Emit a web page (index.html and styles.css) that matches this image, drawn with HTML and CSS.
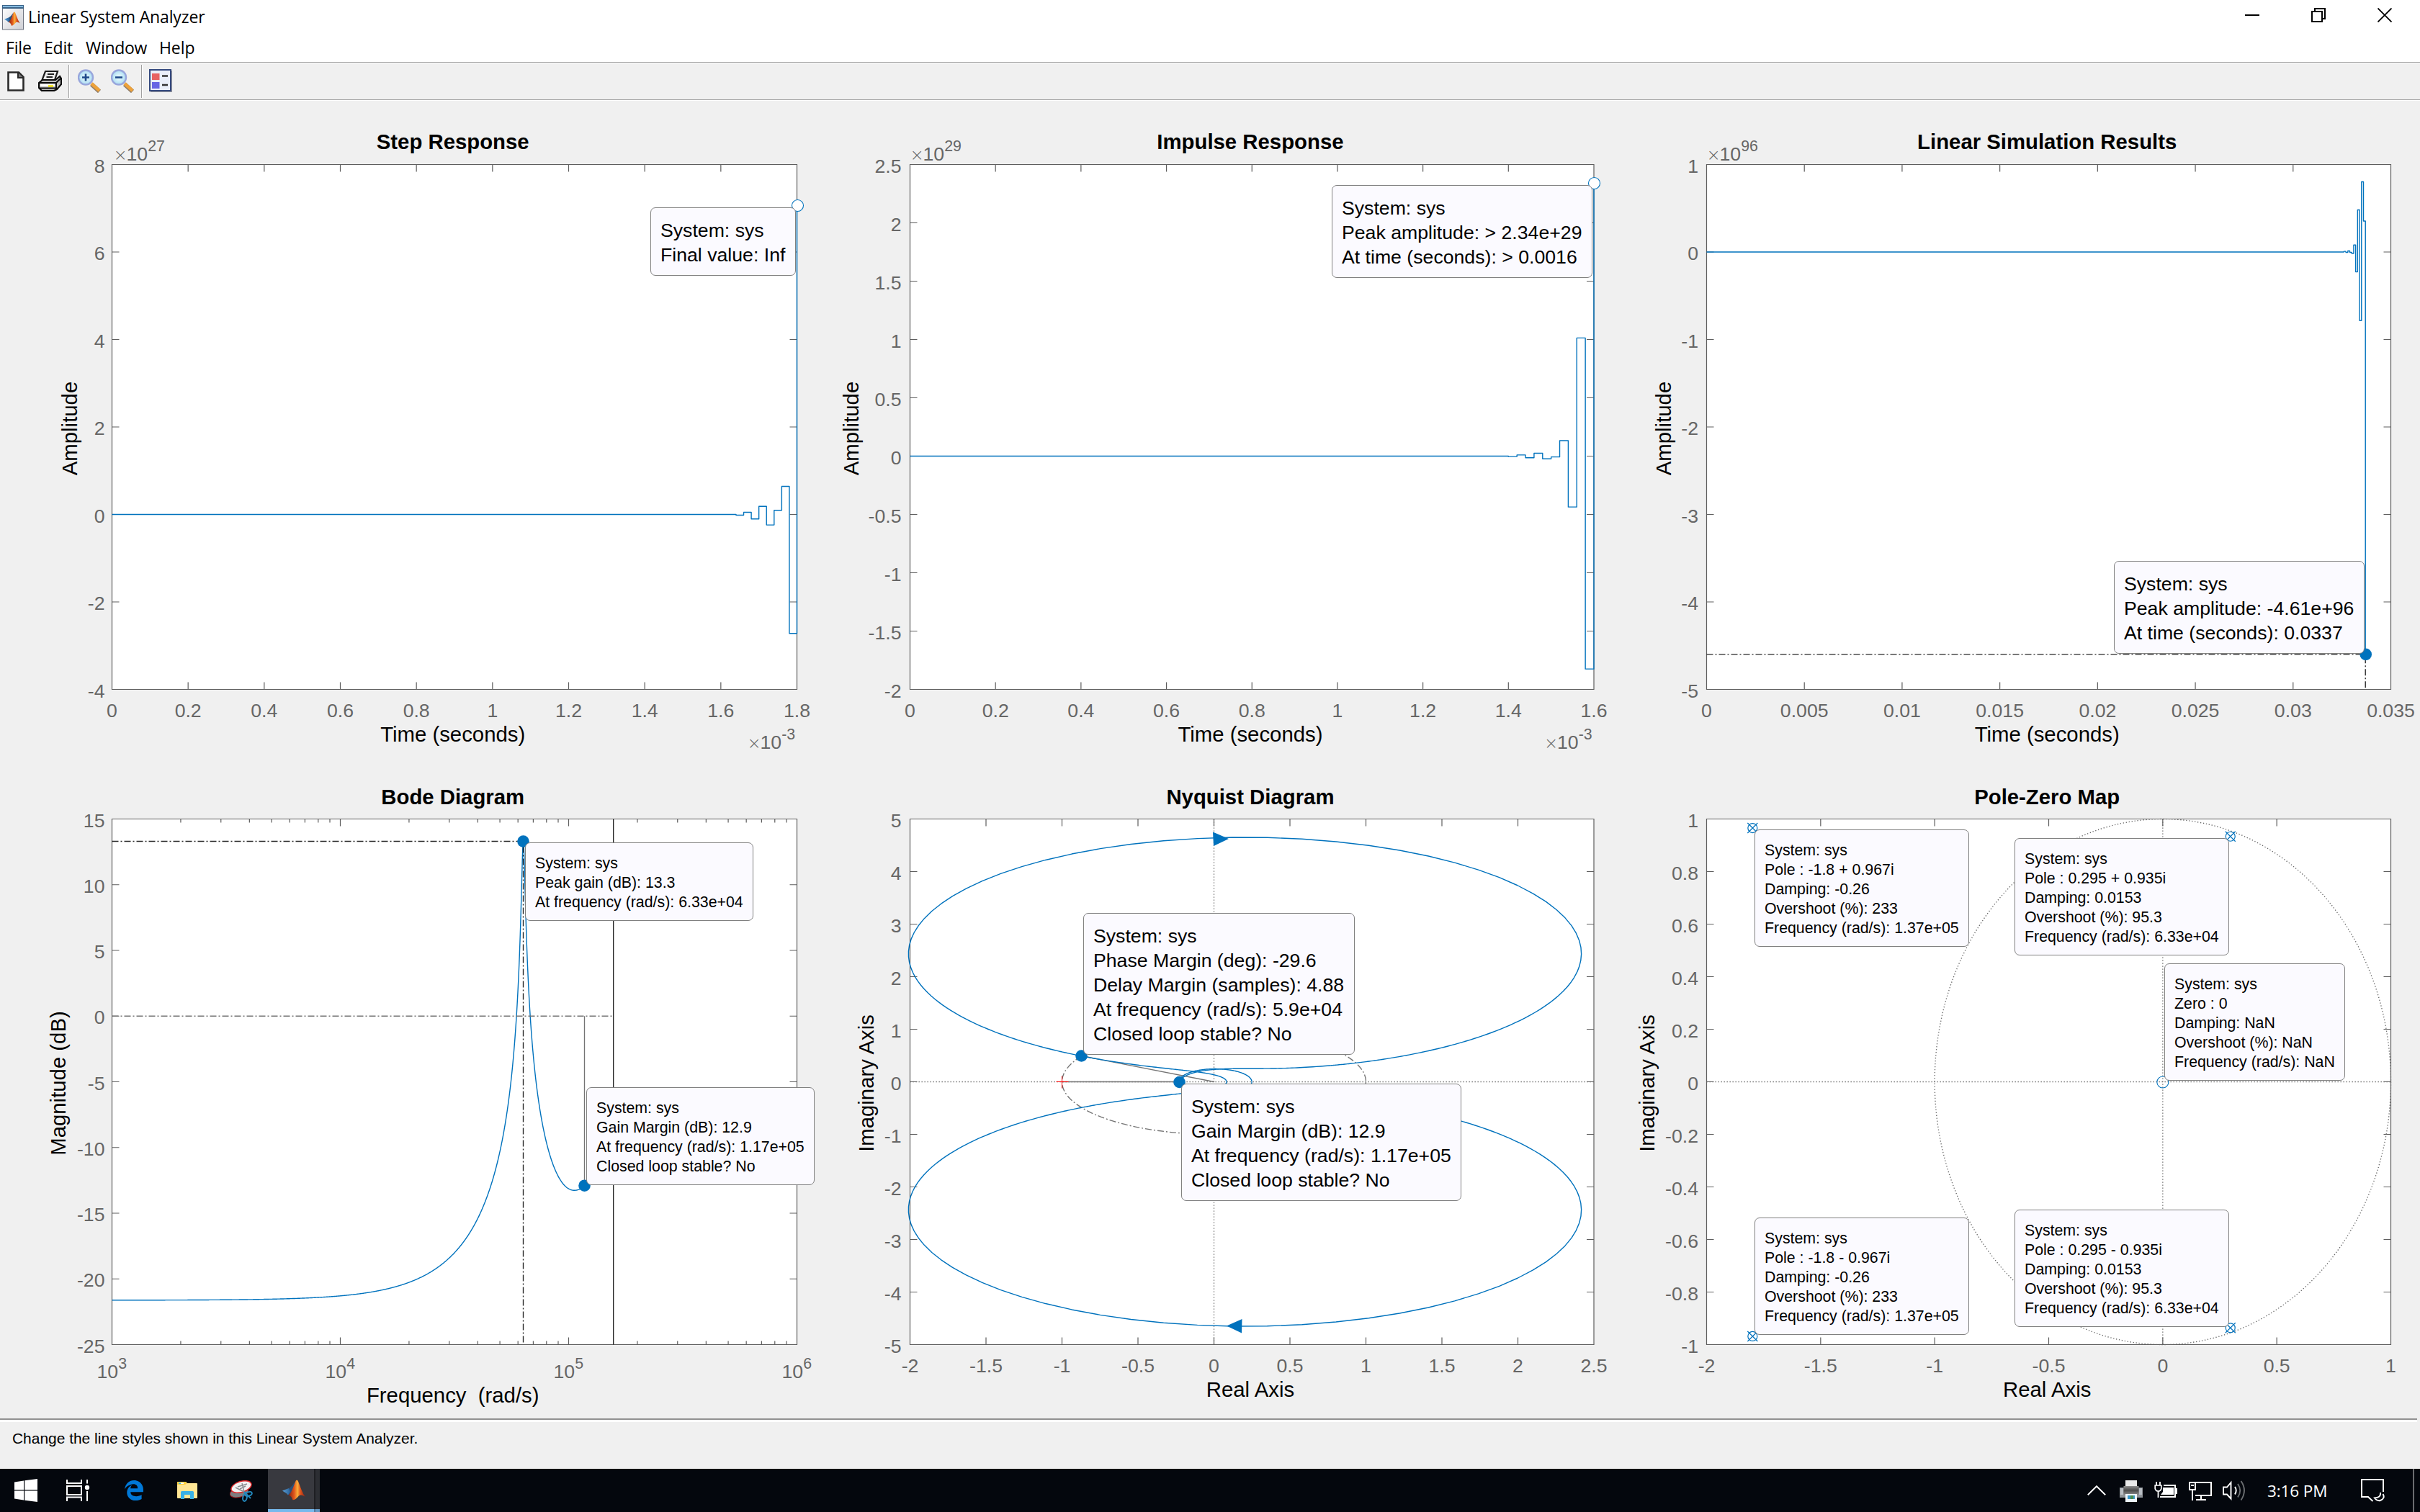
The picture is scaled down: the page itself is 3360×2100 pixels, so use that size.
FILE: index.html
```html
<!DOCTYPE html>
<html lang="en">
<head>
<meta charset="utf-8">
<title>Linear System Analyzer</title>
<link rel="stylesheet" href="styles.css">
</head>
<body>
<svg class="defs" width="0" height="0" aria-hidden="true">
  <defs>
    <linearGradient id="flame" x1="0" y1="0" x2="1" y2="0">
      <stop offset="0" stop-color="#7a1c10"/><stop offset=".35" stop-color="#e0561c"/><stop offset=".55" stop-color="#fbb03b"/><stop offset=".7" stop-color="#e2571c"/><stop offset="1" stop-color="#8f1d12"/>
    </linearGradient>
    <linearGradient id="membrane" x1="0" y1="0" x2="1" y2="0">
      <stop offset="0" stop-color="#5aa0d8"/><stop offset="1" stop-color="#1d4f86"/>
    </linearGradient>
    <linearGradient id="sheet" x1="0" y1="0" x2="1" y2="1">
      <stop offset="0" stop-color="#fff"/><stop offset="1" stop-color="#cfcfd4"/>
    </linearGradient>
    <radialGradient id="lens">
      <stop offset="0" stop-color="#f4ffff"/><stop offset="1" stop-color="#a9dcf2"/>
    </radialGradient>
    <linearGradient id="metal" x1="0" y1="0" x2="0" y2="1">
      <stop offset="0" stop-color="#8d8d8d"/><stop offset=".5" stop-color="#4b4b4b"/><stop offset="1" stop-color="#8a8a8a"/>
    </linearGradient>
    <symbol id="matlab" viewBox="0 0 32 28">
      <path d="M0 15 9 11.500 14 16 8 21 5.500 18.500Z" fill="url(#membrane)"/>
      <path d="M9 11.500C13 10 16 4 18.500 1.500L14 16 8 21 11 16Z" fill="#2a4f78"/>
      <path d="M8 21C12 20 15 10 18.500 1.500 20 -1 21 0 22 2 25 9 28 19 32 23.500 28 21 25 19.500 22 23 20 25.500 17 28 14.500 28 13.500 25 12 21.500 8 21Z" fill="url(#flame)"/>
    </symbol>
  </defs>
</svg>

<header class="titlebar">
  <svg class="app-icon" viewBox="0 0 30 35" width="30" height="35">
    <rect x=".5" y=".5" width="29" height="33.500" fill="url(#sheet)" stroke="#6f7480"/>
    <rect x="0" y="0" width="30" height="5" fill="#3a6287"/><rect x="1" y="1" width="28" height="2" fill="#86bbe0"/>
    <use href="#matlab" x="3" y="7.500" width="22" height="23"/>
  </svg>
  <h1>Linear System Analyzer</h1>
  <div class="window-controls">
    <svg width="20" height="20" viewBox="0 0 20 20"><path d="M0 10H20" stroke="#000" stroke-width="2"/></svg>
    <svg width="20" height="20" viewBox="0 0 20 20" fill="none" stroke="#000" stroke-width="2"><path d="M1 5H15V19H1ZM5 5V1H19V15H15"/></svg>
    <svg width="20" height="20" viewBox="0 0 20 20"><path d="M.5.5 19.500 19.500M19.500.5.5 19.500" stroke="#000" stroke-width="1.800"/></svg>
  </div>
</header>

<nav class="menubar"><span class="m-file">File</span><span class="m-edit">Edit</span><span class="m-window">Window</span><span class="m-help">Help</span></nav>

<div class="toolbar">
  <svg class="t-new" width="24" height="28" viewBox="0 0 24 28"><path d="M1.500 1.500H16L22.500 8V26.500H1.500Z" fill="#fff" stroke="#2b2b2b" stroke-width="2.600"/><path d="M15 2V9H22" fill="#777" stroke="#2b2b2b" stroke-width="2"/></svg>
  <svg class="t-print" width="33" height="30" viewBox="0 0 33 30">
    <path d="M10 2H27L23 14H5.500Z" fill="#e9e9e9" stroke="#1a1a1a" stroke-width="2.200"/><path d="M13 6H22M11.500 10H20" stroke="#222" stroke-width="1.800"/>
    <path d="M6 14H24L30 9 32 12V20L26 27 22 29H5L1 25V18Z" fill="#bdbdbd" stroke="#0d0d0d" stroke-width="2.200"/>
    <path d="M1 18H25L31 12M25 18V27" fill="none" stroke="#0d0d0d" stroke-width="2"/><path d="M3 20H23V23H3Z" fill="#fff"/><path d="M14 22.500H21" stroke="#f0e000" stroke-width="2.400"/><path d="M2 25.500H24" stroke="#0d0d0d" stroke-width="2"/>
  </svg>
  <i class="sep"></i>
  <svg class="t-zoom" width="33" height="33" viewBox="0 0 33 33"><path d="M19 21 30 31" stroke="#8a7a6a" stroke-width="6"/><path d="M19 20 30 30" stroke="#eda23b" stroke-width="4.600"/><circle cx="11" cy="11.500" r="10" fill="url(#lens)" stroke="#98a6dc" stroke-width="2.400"/><path d="M6 11.500H16M11 6.500V16.500" stroke="#1f4a8a" stroke-width="2.600"/></svg>
  <svg class="t-zoom" width="33" height="33" viewBox="0 0 33 33"><path d="M19 21 30 31" stroke="#8a7a6a" stroke-width="6"/><path d="M19 20 30 30" stroke="#eda23b" stroke-width="4.600"/><circle cx="11" cy="11.500" r="10" fill="url(#lens)" stroke="#98a6dc" stroke-width="2.400"/><path d="M6 11.500H16" stroke="#1f4a8a" stroke-width="2.600"/></svg>
  <i class="sep"></i>
  <svg class="t-legend" width="33" height="33" viewBox="0 0 33 33"><rect x="2" y="2" width="30" height="30" fill="#9a9aa0"/><rect x="1" y="1" width="29" height="29" fill="#e9eef9" stroke="#34497e" stroke-width="2"/><rect x="4" y="6" width="10.500" height="9" fill="#e76262"/><rect x="4" y="18" width="10.500" height="9" fill="#6666e4"/><path d="M18 9.500H26M18 22H26" stroke="#333" stroke-width="2.600"/></svg>
</div>

<main class="plots">
  <section class="panel"><svg class="plot" id="step" viewBox="0 140 1120 940"></svg>
    <div class="tip tip-step">System: sys
Final value: Inf</div></section>
  <section class="panel"><svg class="plot" id="impulse" viewBox="1120 140 1120 940"></svg>
    <div class="tip tip-impulse">System: sys
Peak amplitude: &gt; 2.34e+29
At time (seconds): &gt; 0.0016</div></section>
  <section class="panel"><svg class="plot" id="lsim" viewBox="2240 140 1120 940"></svg>
    <div class="tip tip-lsim">System: sys
Peak amplitude: -4.61e+96
At time (seconds): 0.0337</div></section>
  <section class="panel"><svg class="plot" id="bode" viewBox="0 1080 1120 890"></svg>
    <div class="tip small tip-peak">System: sys
Peak gain (dB): 13.3
At frequency (rad/s): 6.33e+04</div>
    <div class="tip small tip-gm">System: sys
Gain Margin (dB): 12.9
At frequency (rad/s): 1.17e+05
Closed loop stable? No</div></section>
  <section class="panel"><svg class="plot" id="nyquist" viewBox="1120 1080 1120 890"></svg>
    <div class="tip tip-pm">System: sys
Phase Margin (deg): -29.6
Delay Margin (samples): 4.88
At frequency (rad/s): 5.9e+04
Closed loop stable? No</div>
    <div class="tip tip-ngm">System: sys
Gain Margin (dB): 12.9
At frequency (rad/s): 1.17e+05
Closed loop stable? No</div></section>
  <section class="panel"><svg class="plot" id="pzmap" viewBox="2240 1080 1120 890"></svg>
    <div class="tip small tip-p1">System: sys
Pole : -1.8 + 0.967i
Damping: -0.26
Overshoot (%): 233
Frequency (rad/s): 1.37e+05</div>
    <div class="tip small tip-p2">System: sys
Pole : 0.295 + 0.935i
Damping: 0.0153
Overshoot (%): 95.3
Frequency (rad/s): 6.33e+04</div>
    <div class="tip small tip-z">System: sys
Zero : 0
Damping: NaN
Overshoot (%): NaN
Frequency (rad/s): NaN</div>
    <div class="tip small tip-p3">System: sys
Pole : -1.8 - 0.967i
Damping: -0.26
Overshoot (%): 233
Frequency (rad/s): 1.37e+05</div>
    <div class="tip small tip-p4">System: sys
Pole : 0.295 - 0.935i
Damping: 0.0153
Overshoot (%): 95.3
Frequency (rad/s): 6.33e+04</div></section>
</main>

<footer class="status"><p>Change the line styles shown in this Linear System Analyzer.</p></footer>

<div class="taskbar">
  <svg class="k-start" width="32" height="32" viewBox="0 0 32 32" fill="#fff"><path d="M0 4.500 13 2.500V15.300H0ZM14.200 2.300 32 0V15.300H14.200ZM0 16.600H13V29.500L0 27.500ZM14.200 16.600H32V32L14.200 29.700Z"/></svg>
  <svg class="k-view" width="33" height="30" viewBox="0 0 33 30" fill="none" stroke="#fff" stroke-width="2"><path d="M1 0V5H21V0M1 30V24.500H21V30M1 9H21V21H1ZM29 0V5.500M29 16V30"/><circle cx="29" cy="11" r="3.200" fill="#fff" stroke="none"/></svg>
  <svg class="k-edge" width="26" height="28" viewBox="25 8 462 496" preserveAspectRatio="none"><path fill="#0078d7" d="M486.286 243.671c0-44.032-7.754-84.465-28.801-122.405C416.498 47.879 343.912 8.001 258.893 8.001 118.962 7.724 40.617 113.214 26.056 227.679c42.429-61.312 117.073-121.376 220.375-124.966 0 0 109.666 0 99.419 104.957H169.997c6.369-37.386 18.554-58.986 34.339-78.926-75.048 34.893-121.850 96.096-120.742 188.315.83 71.448 50.124 144.836 120.743 171.976 83.357 31.843 192.776 7.200 240.132-21.324V363.307c-80.864 56.494-270.871 60.925-272.255-67.572h314.073v-52.064z"/></svg>
  <svg class="k-folder" width="28" height="24" viewBox="0 0 28 24"><path d="M0 1Q0 0 1 0H12L14 2H27Q28 2 28 3V22Q28 23 27 23H1Q0 23 0 22Z" fill="#ffe694"/><path d="M0 1Q0 0 1 0H12L13.500 2 11 4H0Z" fill="#ffcf3e"/><path d="M2 1.300H9V3H2Z" fill="#fff"/><path d="M2 1.300H5V3H2Z" fill="#3ab0e4"/><path d="M5 24V14.500Q5 13 6.500 13H21.500Q23 13 23 14.500V24H18V18H10V24Z" fill="#38b1e6"/></svg>
  <svg class="k-snip" width="32" height="30" viewBox="0 0 32 30"><ellipse cx="13" cy="17" rx="13" ry="6.500" transform="rotate(-12 13 17)" fill="#7d7d7f" stroke="#a0191b"/><ellipse cx="16" cy="9" rx="14.500" ry="7.500" transform="rotate(-17 16 9)" fill="#f2f2f2" stroke="#dc2a2c" stroke-width="1.500"/><path d="M17 4 20 16M8 10 20 16M11 9 24 5M14 12 22 8" stroke="#8a8d90" stroke-width="1.400"/><g fill="none" stroke="#2289be" stroke-width="2"><ellipse cx="26" cy="19" rx="5" ry="2.800" transform="rotate(-18 26 19)"/><ellipse cx="21" cy="24" rx="2.800" ry="5" transform="rotate(12 21 24)"/><path d="M20 16 29 25"/></g></svg>
  <div class="task-active"><svg width="32" height="29" viewBox="0 0 32 28"><use href="#matlab" width="32" height="28"/></svg><i></i></div>
  <div class="tray">
    <svg class="y-up" width="26" height="14" viewBox="0 0 26 14"><path d="M.8 13.200 13 1.200 25.200 13.200" fill="none" stroke="#fff" stroke-width="1.900"/></svg>
    <svg class="y-print" width="32" height="30" viewBox="0 0 32 30"><rect x="8" y="0" width="16" height="9" fill="#e9e9e9"/><path d="M0 10H32V24H0Z" fill="#8f9499"/><path d="M5.500 8H26.500V20H5.500Z" fill="url(#metal)"/><path d="M1 11H5V20H1ZM27 11H31V20H27Z" fill="#b9bec4"/><path d="M8 19H24V30H8Z" fill="#eef4f8"/><path d="M11 21H21V26H11Z" fill="#3b97c8"/><path d="M15 21H19V26H15Z" fill="#4a8c4e"/></svg>
    <svg class="y-batt" width="32" height="23" viewBox="0 0 32 23"><path d="M13 5H29V21H8" fill="none" stroke="#fff" stroke-width="2"/><path d="M12 8H27V18H9L12 14Z" fill="#fff"/><path d="M30 9H32V17H30Z" fill="#fff"/><path d="M3 0V5M8 0V5M5.500 13V22" stroke="#fff" stroke-width="1.800"/><path d="M1.200 5H9.800V9.500Q9 13 5.500 13T1.200 9.500Z" fill="none" stroke="#fff" stroke-width="1.700"/></svg>
    <svg class="y-net" width="32" height="26" viewBox="0 0 32 26" fill="none" stroke="#fff" stroke-width="2"><path d="M9 1H31V19H9M17 20V25M10 25H24M5 11V26M1 1H9V11H1ZM3 5H7"/></svg>
    <svg class="y-vol" width="33" height="28" viewBox="0 0 33 28" fill="none" stroke-width="1.900"><path d="M1 9.500H6L11.500 3V25.500L6 19.500H1Z" stroke="#fff"/><path d="M17 9Q20.500 14 17 19.500" stroke="#fff"/><path d="M21 5Q27.500 14 21 23.500M25.500 1Q34.500 14 25.500 27.500" stroke="#6c6f72"/></svg>
    <span class="clock">3:16 PM</span>
    <svg class="y-note" width="33" height="32" viewBox="0 0 33 32" fill="none" stroke="#fff" stroke-width="2"><path d="M31 18V1H1V25H10L16.500 31"/><path d="M27 19Q28 26 19 26.500 22 31 27 30 34 27 30.500 21" /></svg>
    <i class="peek"></i>
  </div>
</div>
<script src="plots.js"></script>
</body>
</html>
```
FILE: styles.css
```css
* { box-sizing: border-box; }
body {
  margin: 0;
  width: 3360px;
  height: 2100px;
  display: flex;
  flex-direction: column;
  overflow: hidden;
  background: #f0f0f0;
  color: #000;
  font-family: "Liberation Sans", Arial, sans-serif;
}
svg { display: block; flex: none; }
.defs { position: absolute; }

/* window chrome */
.titlebar {
  height: 46px;
  background: #fff;
  display: flex;
  align-items: flex-start;
  padding: 7px 39px 0 3px;
}
.titlebar h1 {
  margin: -1px 0 0 6px;
  font: 400 23px/34px "Open Sans", "Noto Sans", sans-serif;
  letter-spacing: -0.130px;
}
.window-controls { margin: 4px 0 0 auto; display: flex; gap: 72px; }

.menubar {
  height: 40px;
  background: #fff;
  display: flex;
  padding-left: 8px;
  font: 400 23px/41px "Open Sans", "Noto Sans", sans-serif;
  letter-spacing: -0.200px;
}
.m-file { width: 53px; }
.m-edit { width: 58px; }
.m-window { width: 102px; letter-spacing: -0.300px; }
.m-help { letter-spacing: -0.1px; }

.toolbar {
  height: 54px;
  border-top: 1px solid #a0a0a0;
  border-bottom: 1px solid #fff;
  box-shadow: inset 0 1px #fff, inset 0 -1px #a0a0a0;
  display: flex;
  align-items: flex-start;
  padding: 9px 0 0 10px;
}
.toolbar svg { margin-right: 13px; }
.toolbar .t-new { margin: 3px 19px 0 0; }
.toolbar .t-print { margin: 1px 9px 0 0; }
.toolbar .t-zoom + .t-zoom { margin-right: 9px; }
.toolbar .t-legend { margin-left: -2px; }
.sep { width: 2px; height: 46px; margin: -6px 11px 0 0; border-left: 1px solid #a0a0a0; background: #fff; }

/* plot grid */
.plots {
  height: 1830px;
  display: grid;
  grid-template-columns: repeat(3, 1120px);
  grid-template-rows: 940px 890px;
}
.panel { position: relative; }
.plot { width: 100%; height: 100%; overflow: visible; }
.axes-bg { fill: #fff; }
.axis { fill: none; stroke: #5e5e5e; stroke-width: 1.200; }
.title { font-weight: 700; font-size: 29.330px; text-anchor: middle; }
.label { font-size: 29.330px; text-anchor: middle; white-space: pre; }
.tick { font-size: 26.670px; fill: #666; }
.sup { font-size: 21.330px; }
.times { font-family: "DejaVu Sans", sans-serif; font-weight: 200; font-size: 23px; }
.end { text-anchor: end; }
.mid { text-anchor: middle; }
.curve { fill: none; stroke: #0072bd; stroke-width: 1.400; stroke-linejoin: round; }
.dot { fill: #0072bd; }
.ring { fill: #fff; stroke: #0072bd; stroke-width: 1.100; }
.ring.open { fill: none; }
.cross { fill: none; stroke: #0072bd; stroke-width: 1.200; }
.ref { fill: none; stroke: #262626; stroke-width: 1.350; }
.gray { stroke: #747474; }
.dashdot { stroke-dasharray: 9 3 2 3; }
.dotted { stroke: #666; stroke-dasharray: 1.300 2.700; }
.critical { stroke: #f00; stroke-width: 1; }

/* data tips float over the plots */
.tip {
  position: absolute;
  padding: 14px 0 0 13px;
  border: 1.300px solid #808080;
  border-radius: 7px;
  background: #fbfaff;
  font-size: 26.670px;
  line-height: 34px;
  white-space: pre;
}
.tip.small { padding-top: 15px; font-size: 21.330px; line-height: 27px; }
.tip-step { left: 903px; top: 148px; width: 202px; height: 95px; }
.tip-impulse { left: 729px; top: 117px; width: 362px; height: 129px; }
.tip-lsim { left: 695px; top: 639px; width: 348px; height: 129px; }
.tip-peak { left: 729px; top: 90px; width: 317px; height: 109px; }
.tip-gm { left: 814px; top: 430px; width: 317px; height: 136px; }
.tip-pm { left: 384px; top: 188px; width: 377px; height: 197px; }
.tip-ngm { left: 520px; top: 425px; width: 389px; height: 163px; }
.tip-p1 { left: 196px; top: 72px; width: 298px; height: 163px; }
.tip-p2 { left: 557px; top: 84px; width: 298px; height: 163px; }
.tip-z { left: 765px; top: 258px; width: 251px; height: 163px; }
.tip-p3 { left: 196px; top: 611px; width: 298px; height: 163px; }
.tip-p4 { left: 557px; top: 600px; width: 298px; height: 163px; }

/* status line */
.status { height: 70px; }
.status::before {
  content: "";
  display: block;
  width: 3356px;
  height: 5px;
  background: linear-gradient(#919191 2px, #fff 2px);
}
.status p { margin: 6px 0 0 17px; font-size: 20.950px; line-height: 34px; }

/* taskbar */
.taskbar {
  height: 60px;
  background: #04070d;
  color: #fff;
  display: flex;
  align-items: flex-start;
}
.k-start { margin: 14px 0 0 20px; }
.k-view { margin: 15px 0 0 40px; }
.k-edge { margin: 16px 0 0 48px; }
.k-folder { margin: 18px 0 0 47px; }
.k-snip { margin: 16px 0 0 45px; }
.task-active {
  width: 72px;
  height: 60px;
  margin-left: 21px;
  padding: 15px 0 0 20px;
  display: flex;
  align-items: flex-start;
  background: linear-gradient(90deg, #38393f 64px, #1e1f23 64px, #1e1f23 66px, #2c2e33 66px);
}
.task-active i {
  width: 72px;
  height: 4px;
  margin: 41px 0 0 -52px;
  flex: none;
  background: linear-gradient(90deg, #76b9ed 64px, #547a9b 64px, #547a9b 66px, #6499c6 66px);
}
.tray { margin-left: auto; display: flex; align-items: flex-start; }
.y-up { margin: 23px 19px 0 0; }
.y-print { margin: 16px 16px 0 0; }
.y-batt { margin: 18px 16px 0 0; }
.y-net { margin: 18px 15px 0 0; }
.y-vol { margin: 16px 29px 0 0; }
.clock { width: 86px; margin-right: 44px; font: 400 22.500px/62px "Open Sans", "Noto Sans", sans-serif; letter-spacing: -0.1px; white-space: nowrap; }
.y-note { margin: 14px 39px 0 0; }
.peek { width: 10px; height: 60px; border-left: 2px solid #6a6c70; }
```
FILE: plots.js
```javascript
const NS = "http://www.w3.org/2000/svg";

function el(parent, tag, attrs, text) {
  const node = document.createElementNS(NS, tag);
  for (const k in attrs) node.setAttribute(k, attrs[k]);
  if (text !== undefined) node.textContent = text;
  parent.appendChild(node);
  return node;
}

function linear(d0, d1, r0, r1) {
  return v => r0 + (v - d0) / (d1 - d0) * (r1 - r0);
}

function power(parent, x, y, base, exp, cls, times) {
  const t = el(parent, "text", { x, y, class: cls });
  if (times) {
    el(t, "tspan", { class: "times" }, "×");
    el(t, "tspan", { x: x + 18 }, base);
  } else {
    el(t, "tspan", {}, base);
  }
  el(t, "tspan", { class: "sup", dy: -13 }, exp);
}

function axes(id, c) {
  const svg = document.getElementById(id);
  const [l, r, t, b] = c.box;
  const X = linear(c.x[0], c.x[1], l, r);
  const Y = linear(c.y[0], c.y[1], b, t);
  el(svg, "rect", { class: "axes-bg", x: l, y: t, width: r - l, height: b - t });
  let d = `M${l} ${t}H${r}V${b}H${l}Z`;
  c.xt.forEach(v => { d += `M${X(v)} ${t}v10M${X(v)} ${b}v-10`; });
  (c.minor || []).forEach(v => { d += `M${X(v)} ${t}v5M${X(v)} ${b}v-5`; });
  c.yt.forEach(v => { d += `M${l} ${Y(v)}h10M${r} ${Y(v)}h-10`; });
  c.xt.forEach(v => {
    if (c.log) power(svg, X(v) - 21, b + 46, "10", String(v), "tick");
    else el(svg, "text", { class: "tick mid", x: X(v), y: b + 38.5 }, String(v));
  });
  c.yt.forEach(v => el(svg, "text", { class: "tick end", x: l - c.pad, y: Y(v) + 11 }, String(v)));
  const cx = (l + r) / 2 - 2.3;
  el(svg, "text", { class: "title", x: cx, y: t - c.titleGap }, c.title);
  el(svg, "text", { class: "label", x: cx, y: c.xlabelY }, c.xlabel);
  el(svg, "text", { class: "label", transform: `translate(${c.ylabelX} ${(t + b) / 2 + 2}) rotate(-90)` }, c.ylabel);
  if (c.yexp) power(svg, c.yexpX, 222.5, "10", c.yexp, "tick", true);
  if (c.xexp) power(svg, r - 69, 1039.5, "10", c.xexp, "tick", true);
  el(svg, "path", { class: "axis", d });
  return { svg, X, Y, l, r, t, b };
}

function range(a, b, s) {
  const out = [];
  for (let i = 0; a + i * s <= b + s / 1e3; i++) out.push(+(a + i * s).toFixed(6));
  return out;
}

/* staircase through [time, value] samples, starting flat at zero */
function stairs(p, samples) {
  let d = `M${p.l} ${p.Y(0)}`;
  samples.forEach(([x, y]) => { d += `H${p.X(x)}V${p.Y(y)}`; });
  el(p.svg, "path", { class: "curve", d });
}

const TOP = [228.5, 957.5], LOW = [1137.5, 1867.5];

/* step response */
let p = axes("step", {
  box: [155.5, 1106.5, ...TOP], x: [0, 1.8], y: [-4, 8], xt: range(0, 1.8, .2), yt: range(-4, 8, 2),
  pad: 10, titleGap: 21.5, title: "Step Response", xlabel: "Time (seconds)", xlabelY: 1030,
  ylabel: "Amplitude", ylabelX: 107, yexp: "27", yexpX: 157.5, xexp: "-3"
});
stairs(p, [[1.64, -.016], [1.66, .05], [1.68, -.104], [1.7, .184], [1.72, -.24], [1.74, .094], [1.76, .642], [1.78, -2.72], [1.8, 7.06]]);
el(p.svg, "circle", { class: "ring", cx: 1107.5, cy: 285.5, r: 8 });

/* impulse response */
p = axes("impulse", {
  box: [1263.5, 2213, ...TOP], x: [0, 1.6], y: [-2, 2.5], xt: range(0, 1.6, .2), yt: range(-2, 2.5, .5),
  pad: 12, titleGap: 21.5, title: "Impulse Response", xlabel: "Time (seconds)", xlabelY: 1030,
  ylabel: "Amplitude", ylabelX: 1191.5, yexp: "29", yexpX: 1263.5, xexp: "-3"
});
stairs(p, [[1.4, -.004], [1.42, .01], [1.44, -.014], [1.46, .025], [1.48, -.023], [1.5, -.007], [1.52, .133], [1.54, -.436], [1.56, 1.013], [1.58, -1.825], [1.6, 2.34]]);
el(p.svg, "circle", { class: "ring", cx: 2213.5, cy: 254.5, r: 8 });

/* linear simulation */
p = axes("lsim", {
  box: [2369.5, 3319.5, ...TOP], x: [0, .035], y: [-5, 1], xt: range(0, .035, .005), yt: range(-5, 1, 1),
  pad: 11.5, titleGap: 21.5, title: "Linear Simulation Results", xlabel: "Time (seconds)", xlabelY: 1030,
  ylabel: "Amplitude", ylabelX: 2320, yexp: "96", yexpX: 2369.5
});
stairs(p, [[.0326, .007], [.0327, -.005], [.0328, .012], [.0329, -.004], [.033, -.016], [.0331, .08], [.0332, -.227], [.0333, .482], [.0334, -.784], [.0335, .803], [.0336, .354], [.0337, -4.61]]);
el(p.svg, "path", { class: "ref dashdot", d: `M${p.l} ${p.Y(-4.6)}H${p.X(.0337)}V${p.b}` });
el(p.svg, "circle", { class: "dot", cx: p.X(.0337) + .5, cy: p.Y(-4.6), r: 8.3 });

/* sampled transfer function z^4 / ((z^2 + 3.6z + 4.175)(z^2 - 2r cos(a) z + r^2)) on the unit circle */
const TS = 2e-5, POLE_R = .981, POLE_A = 1.266;
function response(w) {
  const th = w * TS, c1 = Math.cos(th), s1 = Math.sin(th), c2 = Math.cos(2 * th), s2 = Math.sin(2 * th);
  const k = -2 * POLE_R * Math.cos(POLE_A);
  const ar = c2 + 3.6 * c1 + 4.175, ai = s2 + 3.6 * s1;
  const br = c2 + k * c1 + POLE_R * POLE_R, bi = s2 + k * s1;
  const mag = 1 / (Math.hypot(ar, ai) * Math.hypot(br, bi));
  const ph = 4 * th - Math.atan2(ai, ar) - Math.atan2(bi, br);
  return { mag, re: mag * Math.cos(ph), im: mag * Math.sin(ph) };
}
const NYQ = Math.PI / TS;

/* Bode magnitude */
const minor = [];
for (let dec = 3; dec < 6; dec++) for (let m = 2; m < 10; m++) minor.push(dec + Math.log10(m));
p = axes("bode", {
  box: [155.5, 1106.5, ...LOW], x: [3, 6], y: [-25, 15], xt: [3, 4, 5, 6], yt: range(-25, 15, 5), minor, log: true,
  pad: 10, titleGap: 20.5, title: "Bode Diagram", xlabel: "Frequency\u00a0 (rad/s)", xlabelY: 1948,
  ylabel: "Magnitude (dB)", ylabelX: 91
});
let d = "";
for (let e = 3; e < Math.log10(NYQ); e += .0015) {
  d += (d ? "L" : "M") + p.X(e).toFixed(2) + " " + p.Y(20 * Math.log10(response(10 ** e).mag)).toFixed(2);
}
el(p.svg, "path", { class: "curve", d });
el(p.svg, "path", { class: "ref", d: `M${p.X(Math.log10(NYQ))} ${p.t}V${p.b}` });
el(p.svg, "path", { class: "ref gray dashdot", d: `M${p.l} ${p.Y(0)}H${p.X(Math.log10(NYQ))}` });
el(p.svg, "path", { class: "ref gray", d: `M811.5 ${p.Y(0)}V${p.Y(-12.9)}` });
el(p.svg, "path", { class: "ref dashdot", d: `M${p.l} ${p.Y(13.3)}H726.5V${p.b}` });
el(p.svg, "circle", { class: "dot", cx: 726.5, cy: p.Y(13.3), r: 8.3 });
el(p.svg, "circle", { class: "dot", cx: 811.5, cy: p.Y(-12.9), r: 8.3 });

/* Nyquist */
p = axes("nyquist", {
  box: [1263.5, 2213, ...LOW], x: [-2, 2.5], y: [-5, 5], xt: range(-2, 2.5, .5), yt: range(-5, 5, 1),
  pad: 12, titleGap: 20.5, title: "Nyquist Diagram", xlabel: "Real Axis", xlabelY: 1939.5,
  ylabel: "Imaginary Axis", ylabelX: 1213
});
el(p.svg, "path", { class: "ref dotted", d: `M${p.l} ${p.Y(0)}H${p.r}M${p.X(0)} ${p.t}V${p.b}` });
el(p.svg, "ellipse", { class: "ref gray dashdot", cx: p.X(0), cy: p.Y(0), rx: p.X(1) - p.X(0), ry: p.Y(0) - p.Y(1) });
el(p.svg, "path", { class: "ref gray", d: `M${p.X(-1)} ${p.Y(0)}H${p.X(-.228)}M${p.X(0)} ${p.Y(0)}L${p.X(-.87)} ${p.Y(.493)}` });
for (const sign of [1, -1]) {
  d = "";
  for (let w = 0; w <= NYQ; w += w > 58000 && w < 69000 ? 50 : 250) {
    const h = response(w);
    d += (d ? "L" : "M") + p.X(h.re).toFixed(2) + " " + p.Y(sign * h.im).toFixed(2);
  }
  el(p.svg, "path", { class: "curve", d });
}
el(p.svg, "path", { class: "critical", d: `M${p.X(-1) - 8} ${p.Y(0)}h17M${p.X(-1)} ${p.Y(0) - 8}v17` });
el(p.svg, "path", { class: "dot", d: "M1684 1155.500 1706 1165 1685 1175ZM1703 1841.500 1724.500 1832 1724 1851.500Z" });
el(p.svg, "circle", { class: "dot", cx: 1501.5, cy: 1466.5, r: 8.3 });
el(p.svg, "circle", { class: "dot", cx: 1637.5, cy: p.Y(0) + .5, r: 8.3 });

/* pole-zero map */
p = axes("pzmap", {
  box: [2369.5, 3319.5, ...LOW], x: [-2, 1], y: [-1, 1], xt: range(-2, 1, .5), yt: range(-1, 1, .2),
  pad: 11.5, titleGap: 20.5, title: "Pole-Zero Map", xlabel: "Real Axis", xlabelY: 1939.5,
  ylabel: "Imaginary Axis", ylabelX: 2297
});
el(p.svg, "path", { class: "ref dotted", d: `M${p.l} ${p.Y(0)}H${p.r}M${p.X(0)} ${p.t}V${p.b}` });
el(p.svg, "ellipse", { class: "ref dotted", cx: p.X(0), cy: p.Y(0), rx: p.X(1) - p.X(0), ry: p.Y(0) - p.Y(1) });
[[-1.8, .967], [-1.8, -.967], [.295, .935], [.295, -.935]].forEach(([re, im]) => {
  const x = p.X(re) + .5, y = p.Y(im) + .5;
  el(p.svg, "circle", { class: "cross", cx: x, cy: y, r: 6.5 });
  el(p.svg, "path", { class: "cross", d: `M${x - 7} ${y - 7}l14 14m0 -14l-14 14` });
});
el(p.svg, "circle", { class: "ring open", cx: p.X(0), cy: p.Y(0) + .5, r: 8 });
```
